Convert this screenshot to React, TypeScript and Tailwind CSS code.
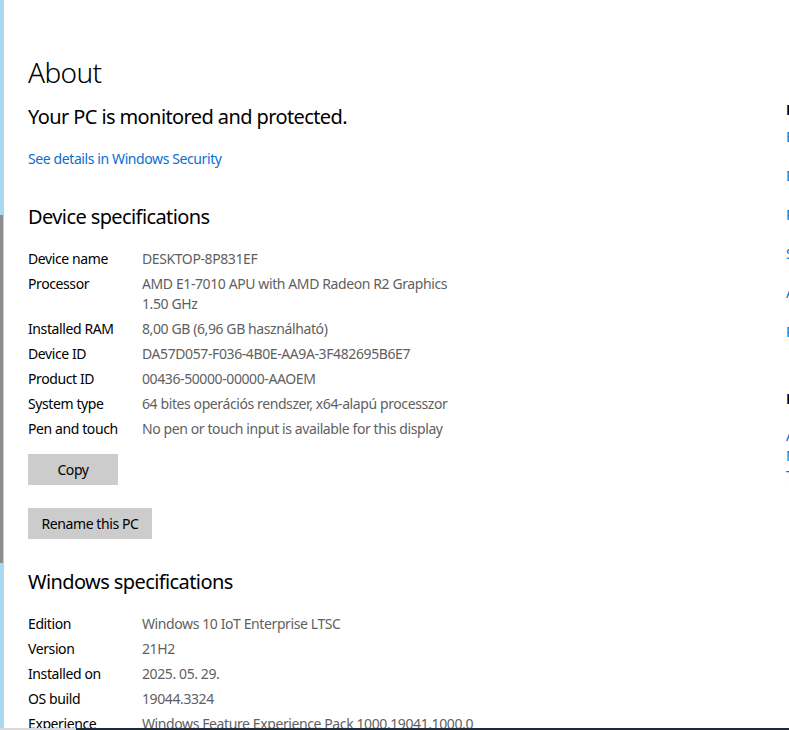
import React from "react";

const device = [
  { label: "Device name", value: ["DESKTOP-8P831EF"] },
  { label: "Processor", value: ["AMD E1-7010 APU with AMD Radeon R2 Graphics", "1.50 GHz"] },
  { label: "Installed RAM", value: ["8,00 GB (6,96 GB használható)"] },
  { label: "Device ID", value: ["DA57D057-F036-4B0E-AA9A-3F482695B6E7"] },
  { label: "Product ID", value: ["00436-50000-00000-AAOEM"] },
  { label: "System type", value: ["64 bites operációs rendszer, x64-alapú processzor"] },
  { label: "Pen and touch", value: ["No pen or touch input is available for this display"] },
];

const windows = [
  { label: "Edition", value: ["Windows 10 IoT Enterprise LTSC"] },
  { label: "Version", value: ["21H2"] },
  { label: "Installed on", value: ["2025. 05. 29."] },
  { label: "OS build", value: ["19044.3324"] },
  { label: "Experience", value: ["Windows Feature Experience Pack 1000.19041.1000.0"] },
];

const related = [
  "BitLocker settings",
  "Device Manager",
  "Remote desktop",
  "System protection",
  "Advanced system settings",
  "Rename this PC (for advanced users)",
];

function SpecTable({ rows }: { rows: { label: string; value: string[] }[] }) {
  return (
    <div className="flex flex-col gap-[5px]">
      {rows.map((row) => (
        <div key={row.label} className="flex text-[14px] leading-[20px] tracking-[-0.4px]">
          <div className="w-[114px] shrink-0 text-black">{row.label}</div>
          <div className="text-[#5f5f5f] whitespace-nowrap">
            {row.value.map((v) => (
              <div key={v}>{v}</div>
            ))}
          </div>
        </div>
      ))}
    </div>
  );
}

export default function App() {
  return (
    <div
      className="relative w-[789px] h-[730px] overflow-hidden bg-white flex"
      style={{ fontFamily: '"Noto Sans", "Open Sans", sans-serif' }}
    >
      {/* window edge / scrollbar */}
      <div className="w-[4px] shrink-0 flex flex-col bg-[#a8d7f0]">
        <div className="h-[215px]" />
        <div className="h-[348px] w-[3px] bg-[#8c8c8c]" />
      </div>

      {/* main column */}
      <div className="w-[782px] shrink-0 pl-[24px] pt-[52px]">
        <h1 className="text-[28px] leading-[40px] font-light tracking-[-0.6px] text-black">About</h1>
        <p className="mt-[11px] text-[20px] leading-[28px] tracking-[-0.6px] text-black">
          Your PC is monitored and protected.
        </p>
        <a className="block mt-[18px] text-[14px] leading-[20px] tracking-[-0.4px] text-[#0a6ed1]">
          See details in Windows Security
        </a>

        <h2 className="mt-[34px] text-[20px] leading-[28px] tracking-[-0.6px] text-black">
          Device specifications
        </h2>
        <div className="mt-[18px]">
          <SpecTable rows={device} />
        </div>

        <button className="block mt-[15px] w-[90px] h-[31px] bg-[#cccccc] text-[14px] tracking-[-0.4px] text-black">
          Copy
        </button>
        <button className="block mt-[23px] w-[124px] h-[31px] bg-[#cccccc] text-[14px] tracking-[-0.4px] text-black">
          Rename this PC
        </button>

        <h2 className="mt-[29px] text-[20px] leading-[28px] tracking-[-0.6px] text-black">
          Windows specifications
        </h2>
        <div className="mt-[18px]">
          <SpecTable rows={windows} />
        </div>
      </div>

      {/* related settings column, mostly off-screen */}
      <div className="w-[240px] shrink-0 pt-[100px] text-[14px] leading-[20px] tracking-[-0.4px] whitespace-nowrap">
        <div className="text-black font-semibold">Related settings</div>
        <div className="mt-[7px] flex flex-col gap-[19px] text-[#0a6ed1]">
          {related.map((r) => (
            <a key={r}>{r}</a>
          ))}
        </div>
        <div className="mt-[47px] text-black font-semibold">Help from the web</div>
        <div className="mt-[17px] flex flex-col text-[#0a6ed1]">
          <a>Adding a device</a>
          <a>Managing devices</a>
          <a>Troubleshooting</a>
        </div>
      </div>

      {/* edge of the taskbar / window below */}
      <div className="absolute left-0 bottom-0 w-full h-[2px] flex">
        <div className="w-[76px] bg-[#d9d9d9]" />
        <div className="flex-1 bg-[#1c2a3a]" />
      </div>
    </div>
  );
}
